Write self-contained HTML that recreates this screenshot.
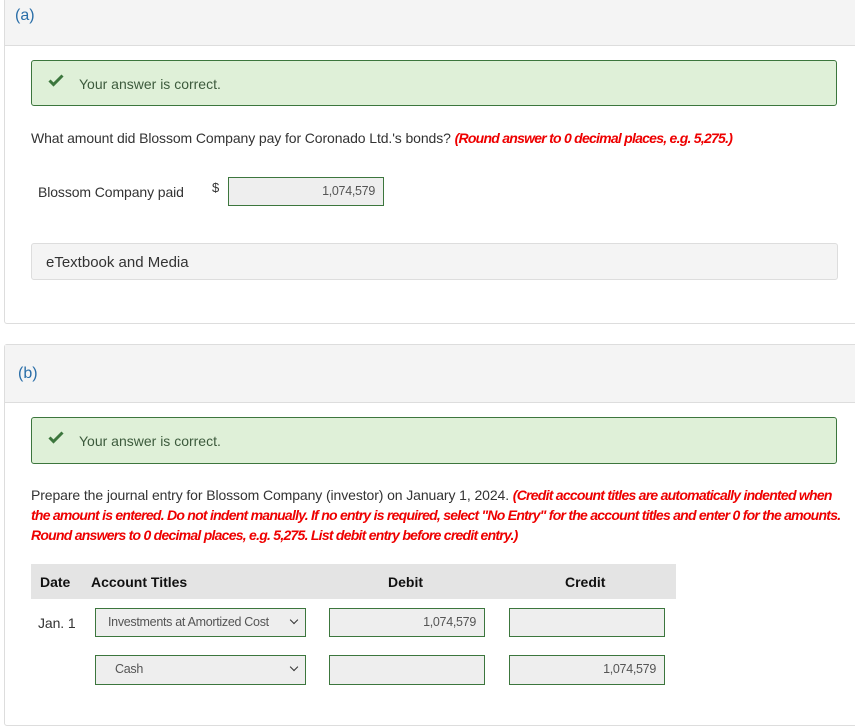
<!DOCTYPE html>
<html><head><style>
body{margin:0;width:855px;height:711px;background:#fff;font-family:"Liberation Sans",sans-serif;position:relative;overflow:hidden;color:#333}
.a{position:absolute}
.card{position:absolute;left:4px;width:860px;border:1px solid #ddd;border-radius:3px;background:#fff}
.hdr{background:#f4f4f4;border-bottom:1px solid #ddd;color:#2a6ea8;font-size:16px}
.ok{position:absolute;left:31px;width:806px;height:46px;background:#dff0d8;border:1px solid #3c763d;border-radius:3px;box-sizing:border-box;color:#3c5a3c;font-size:14px}
.red{color:#e00;font-style:italic;font-weight:bold;letter-spacing:-0.75px}
.inp{position:absolute;border:1px solid #3c763d;background:#eee;box-sizing:border-box;font-size:12.5px;color:#555;letter-spacing:-0.3px}
.num{text-align:right;padding-right:8px;line-height:26px}
.sel{padding-left:12px;line-height:26px}
.sel:after{content:"";position:absolute;right:8px;top:8px;width:5px;height:5px;border-right:1.5px solid #333;border-bottom:1.5px solid #333;transform:rotate(45deg)}
.tx{font-size:14px;color:#333;letter-spacing:-0.1px}
</style></head><body>
<div class="card" style="top:-2px;height:324px">
 <div class="hdr" style="height:46px"><span class="a" style="left:10px;top:8px">(a)</span></div>
</div>
<div class="ok" style="top:60px"><svg class="a" style="left:16px;top:13px" width="16" height="13" viewBox="0 0 16 13"><path d="M1.5 6.5l4 4 9-9" stroke="#3c763d" stroke-width="3" fill="none"/></svg><span class="a" style="left:47px;top:15px">Your answer is correct.</span></div>
<div class="a tx" style="left:31px;top:130px">What amount did Blossom Company pay for Coronado Ltd.'s bonds? <span class="red">(Round answer to 0 decimal places, e.g. 5,275.)</span></div>
<div class="a tx" style="left:38px;top:184px">Blossom Company paid</div>
<div class="a tx" style="left:212px;top:180px;font-size:13px">$</div>
<div class="inp num" style="left:228px;top:177px;width:156px;height:29px;line-height:27px">1,074,579</div>
<div class="a" style="left:31px;top:243px;width:807px;height:37px;border:1px solid #ddd;border-radius:3px;background:#f4f4f4;box-sizing:border-box"><span class="a" style="left:14px;top:10px;font-size:15px;color:#333">eTextbook and Media</span></div>

<div class="card" style="top:344px;height:380px">
 <div class="hdr" style="height:57px"><span class="a" style="left:13px;top:20px">(b)</span></div>
</div>
<div class="ok" style="top:417px;height:47px"><svg class="a" style="left:16px;top:13px" width="16" height="13" viewBox="0 0 16 13"><path d="M1.5 6.5l4 4 9-9" stroke="#3c763d" stroke-width="3" fill="none"/></svg><span class="a" style="left:47px;top:15px">Your answer is correct.</span></div>
<div class="a tx" style="left:31px;top:485px;white-space:nowrap;line-height:20px">Prepare the journal entry for Blossom Company (investor) on January 1, 2024. <span class="red">(Credit account titles are automatically indented when<br>the amount is entered. Do not indent manually. If no entry is required, select "No Entry" for the account titles and enter 0 for the amounts.<br>Round answers to 0 decimal places, e.g. 5,275. List debit entry before credit entry.)</span></div>
<div class="a" style="left:31px;top:564px;width:645px;height:35px;background:#e4e4e4;font-weight:bold;font-size:14px;color:#111">
 <span class="a" style="left:9px;top:10px">Date</span><span class="a" style="left:60px;top:10px">Account Titles</span><span class="a" style="left:357px;top:10px">Debit</span><span class="a" style="left:534px;top:10px">Credit</span></div>
<div class="a tx" style="left:38px;top:615px">Jan. 1</div>
<div class="inp sel" style="left:95px;top:608px;width:211px;height:29px">Investments at Amortized Cost</div>
<div class="inp num" style="left:329px;top:608px;width:156px;height:29px">1,074,579</div>
<div class="inp num" style="left:509px;top:608px;width:156px;height:29px"></div>
<div class="inp sel" style="left:95px;top:655px;width:211px;height:30px;padding-left:19px">Cash</div>
<div class="inp num" style="left:329px;top:655px;width:156px;height:30px"></div>
<div class="inp num" style="left:509px;top:655px;width:156px;height:30px">1,074,579</div>
</body></html>
